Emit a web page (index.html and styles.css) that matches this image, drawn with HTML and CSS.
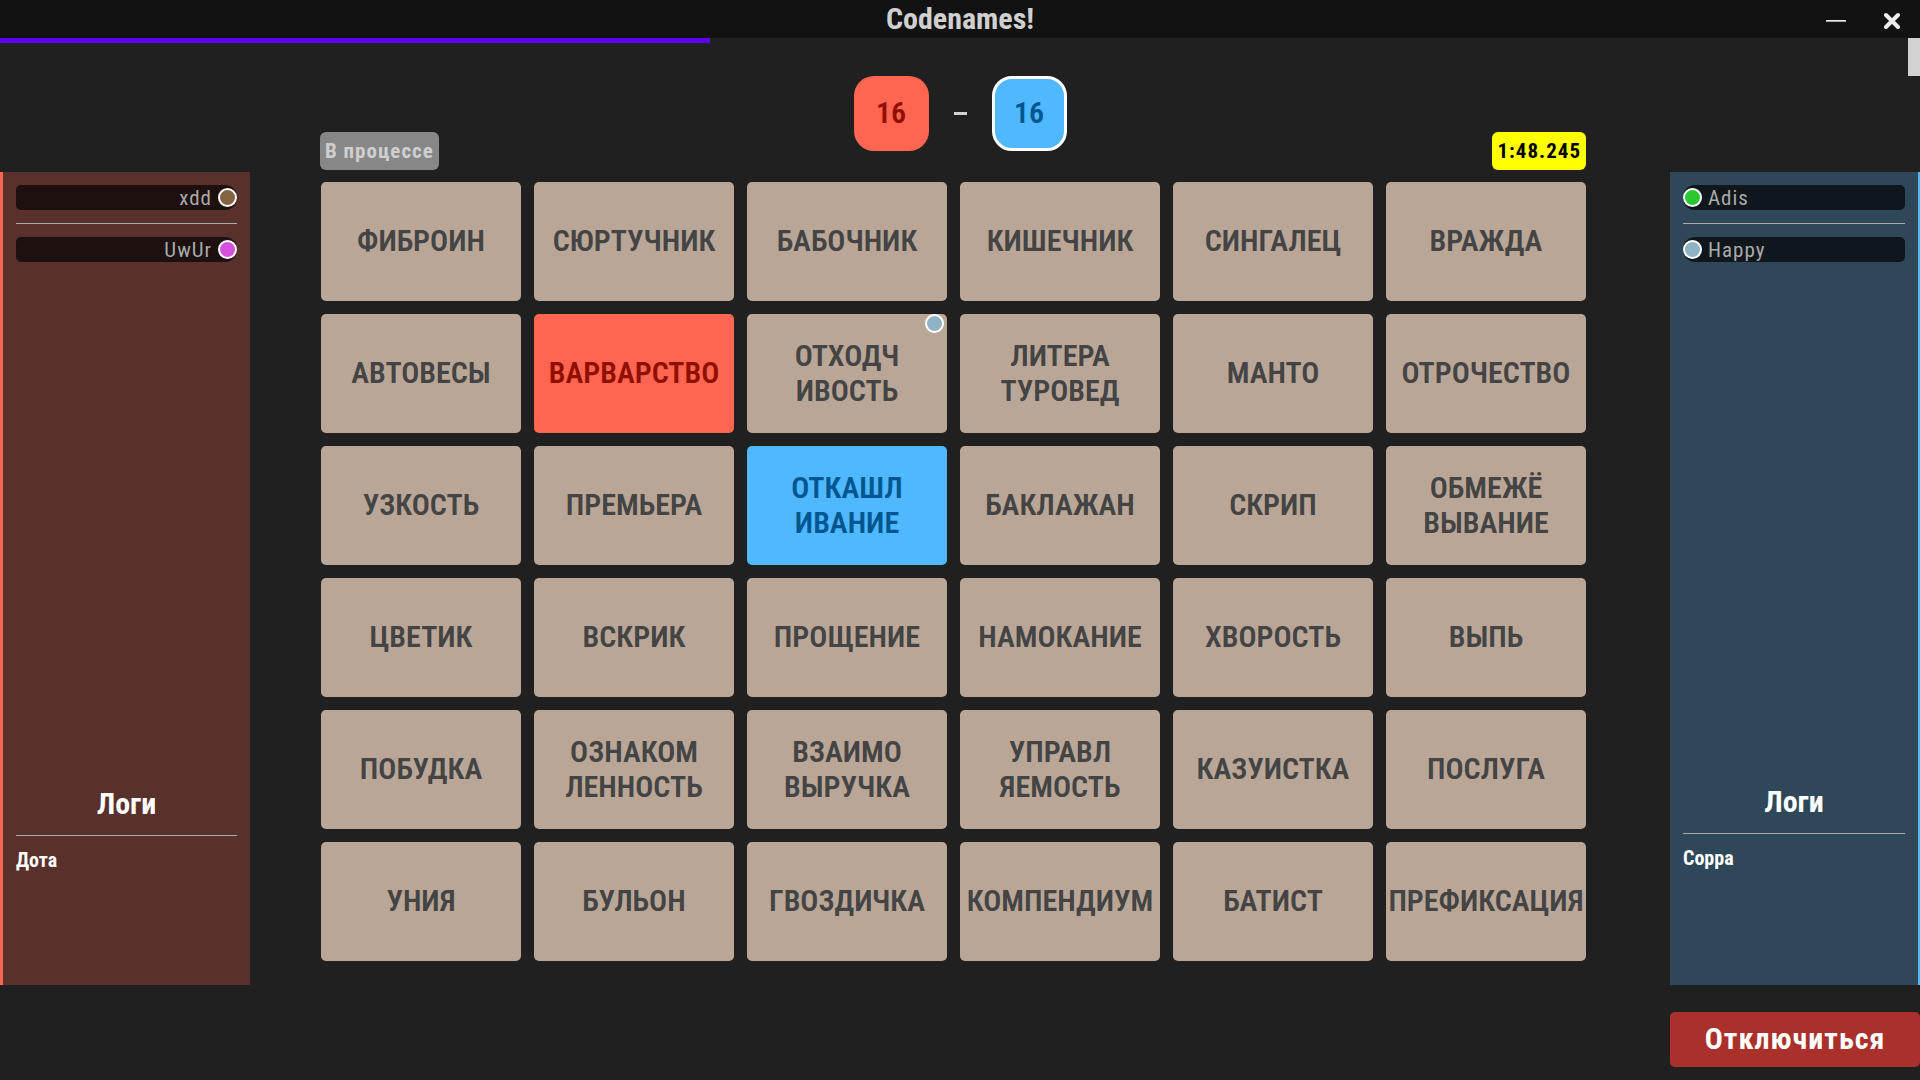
FILE: index.html
```html
<!DOCTYPE html>
<html lang="ru">
<head>
<meta charset="utf-8">
<meta name="viewport" content="width=device-width, initial-scale=1">
<title>Codenames!</title>
<link rel="stylesheet" href="styles.css">
</head>
<body>
<header class="titlebar">
  <h1 class="app-title">Codenames!</h1>
  <div class="window-controls">
    <button class="window-button" type="button" aria-label="Свернуть"><svg width="20" height="20" viewBox="0 0 20 20"><path d="M0 11.5h20" stroke="#e8e8e8" stroke-width="1"/><path d="M0 12.5h20" stroke="#aaa" stroke-width="1"/></svg></button>
    <button class="window-button" type="button" aria-label="Закрыть"><svg width="20" height="20" viewBox="0 0 20 20"><path d="M4 6l12 12M16 6L4 18" stroke="#ececec" stroke-width="4" stroke-linecap="round"/></svg></button>
  </div>
</header>
<div class="progress"><div class="progress-fill" style="width: 37%"></div></div>
<div class="scroll-thumb"></div>

<section class="summary">
  <div class="score">
    <span class="score-box score-red">16</span>
    <span class="score-dash"></span>
    <span class="score-box score-blue score-active">16</span>
  </div>
  <div class="tags">
    <span class="tag tag-status">В процессе</span>
    <span class="tag tag-timer">1:48.245</span>
  </div>
</section>

<main class="game">
  <aside class="team team-red">
    <ul class="players">
      <li class="player"><span class="player-name">xdd</span><span class="dot dot-brown"></span></li>
      <li class="player"><span class="player-name">UwUr</span><span class="dot dot-pink"></span></li>
    </ul>
    <section class="log">
      <h2 class="log-title">Логи</h2>
      <p class="log-entry">Дота</p>
    </section>
  </aside>

  <div class="board">
    <button class="card" type="button">ФИБРОИН</button>
    <button class="card" type="button">СЮРТУЧНИК</button>
    <button class="card" type="button">БАБОЧНИК</button>
    <button class="card" type="button">КИШЕЧНИК</button>
    <button class="card" type="button">СИНГАЛЕЦ</button>
    <button class="card" type="button">ВРАЖДА</button>
    <button class="card" type="button">АВТОВЕСЫ</button>
    <button class="card card-red" type="button">ВАРВАРСТВО</button>
    <button class="card" type="button">ОТХОДЧ<br>ИВОСТЬ<span class="dot dot-steel card-vote"></span></button>
    <button class="card" type="button">ЛИТЕРА<br>ТУРОВЕД</button>
    <button class="card" type="button">МАНТО</button>
    <button class="card" type="button">ОТРОЧЕСТВО</button>
    <button class="card" type="button">УЗКОСТЬ</button>
    <button class="card" type="button">ПРЕМЬЕРА</button>
    <button class="card card-blue" type="button">ОТКАШЛ<br>ИВАНИЕ</button>
    <button class="card" type="button">БАКЛАЖАН</button>
    <button class="card" type="button">СКРИП</button>
    <button class="card" type="button">ОБМЕЖЁ<br>ВЫВАНИЕ</button>
    <button class="card" type="button">ЦВЕТИК</button>
    <button class="card" type="button">ВСКРИК</button>
    <button class="card" type="button">ПРОЩЕНИЕ</button>
    <button class="card" type="button">НАМОКАНИЕ</button>
    <button class="card" type="button">ХВОРОСТЬ</button>
    <button class="card" type="button">ВЫПЬ</button>
    <button class="card" type="button">ПОБУДКА</button>
    <button class="card" type="button">ОЗНАКОМ<br>ЛЕННОСТЬ</button>
    <button class="card" type="button">ВЗАИМО<br>ВЫРУЧКА</button>
    <button class="card" type="button">УПРАВЛ<br>ЯЕМОСТЬ</button>
    <button class="card" type="button">КАЗУИСТКА</button>
    <button class="card" type="button">ПОСЛУГА</button>
    <button class="card" type="button">УНИЯ</button>
    <button class="card" type="button">БУЛЬОН</button>
    <button class="card" type="button">ГВОЗДИЧКА</button>
    <button class="card" type="button">КОМПЕНДИУМ</button>
    <button class="card" type="button">БАТИСТ</button>
    <button class="card" type="button">ПРЕФИКСАЦИЯ</button>
  </div>

  <aside class="team team-blue">
    <ul class="players">
      <li class="player"><span class="dot dot-green"></span><span class="player-name">Adis</span></li>
      <li class="player"><span class="dot dot-steel"></span><span class="player-name">Happy</span></li>
    </ul>
    <section class="log">
      <h2 class="log-title">Логи</h2>
      <p class="log-entry">Сорра</p>
    </section>
  </aside>
</main>

<footer class="footer">
  <button class="disconnect" type="button">Отключиться</button>
</footer>
</body>
</html>
```

FILE: styles.css
```css
* {
  box-sizing: border-box;
}

body {
  margin: 0;
  min-height: 100vh;
  background: #202020;
  color: #fff;
  font-family: "Roboto Condensed", Roboto, sans-serif;
}

button {
  border: 0;
  padding: 0;
  font-family: inherit;
}

/* Window chrome */
.titlebar {
  display: grid;
  grid-template-columns: 1fr auto 1fr;
  align-items: center;
  height: 38px;
  background: #121212;
}

.app-title {
  grid-column: 2;
  margin: 0;
  color: #d0d0d0;
  font-size: 30px;
  line-height: 38px;
}

.window-controls {
  display: flex;
  justify-content: flex-end;
  gap: 36px;
  padding-right: 18px;
}

.window-button {
  display: flex;
  background: none;
}

.progress {
  height: 5px;
}

.progress-fill {
  height: 100%;
  background: #5f00f5;
}

.scroll-thumb {
  position: absolute;
  top: 38px;
  right: 0;
  width: 12px;
  height: 38px;
  background: #d5d3d1;
}

/* Score and round tags share one band */
.summary {
  display: grid;
  height: 129px;
  padding-top: 33px;
}

.score,
.tags {
  grid-area: 1 / 1;
}

.score {
  display: flex;
  align-items: center;
  justify-self: center;
  align-self: start;
  gap: 25px;
}

.score-box {
  display: grid;
  place-items: center;
  width: 75px;
  height: 75px;
  padding-bottom: 2px;
  border-radius: 20px;
  font-size: 30px;
  font-weight: 600;
}

.score-dash {
  width: 13px;
  height: 3px;
  background: #d0d0d0;
}

.score-red {
  background: #ff6550;
  color: #8f0f00;
}

.score-blue {
  background: #50b8ff;
  color: #005690;
}

.score-active {
  border: 3px solid #fff;
}

.tags {
  display: flex;
  justify-content: space-between;
  align-items: flex-end;
  padding: 0 334px 2px 320px;
}

.tag {
  padding: 0 5px;
  border-radius: 6px;
  font-size: 21px;
  font-weight: 700;
  line-height: 38px;
  letter-spacing: 1px;
}

.tag-status {
  background: #878787;
  color: #cfcfcf;
}

.tag-timer {
  background: #ff0;
  color: #000;
}

/* Teams and board */
.game {
  display: grid;
  grid-template-columns: 250px 1fr 250px;
}

.team {
  display: grid;
  grid-template-rows: 600px 1fr;
  padding: 13px;
}

.team-red {
  border-left: 3px solid #ff6550;
  background: #58302c;
}

.team-blue {
  grid-template-rows: 598px 1fr;
  border-right: 2px solid #50b8ff;
  background: #2e485a;
}

.players {
  margin: 0;
  padding: 0;
  list-style: none;
}

.player {
  display: flex;
  align-items: center;
  gap: 6px;
  height: 25px;
  background: #0f171d;
  border-radius: 12px 5px 5px 12px;
}

.team-red .player {
  justify-content: flex-end;
  background: #1e100f;
  border-radius: 5px 12px 12px 5px;
}

.player + .player {
  margin-top: 27px;
  position: relative;
}

.player + .player::before {
  content: "";
  position: absolute;
  top: -14px;
  left: 0;
  right: 0;
  height: 1px;
  background: #aaa;
}

.player-name {
  padding-top: 2px;
  color: #aaa;
  font-size: 21px;
  line-height: 25px;
  letter-spacing: 1px;
}

.dot {
  flex: none;
  width: 19px;
  height: 19px;
  border: 2px solid #fff;
  border-radius: 50%;
}

.dot-brown { background: #846443; }
.dot-pink { background: #d650e0; }
.dot-green { background: #28c830; }
.dot-steel { background: #8fb3c4; }

.log-title {
  margin: 0;
  padding-bottom: 12px;
  border-bottom: 1px solid #aaa;
  font-size: 30px;
  line-height: 38px;
  text-align: center;
}

.log-entry {
  margin: 12px 0;
  font-size: 20px;
  font-weight: 700;
  line-height: 24px;
}

.board {
  display: grid;
  grid-template-columns: repeat(6, minmax(0, 1fr));
  grid-auto-rows: 119px;
  gap: 13px;
  padding: 10px 84px 24px 71px;
}

.card {
  position: relative;
  padding-bottom: 2px;
  border-radius: 5px;
  background: #b9a696;
  color: #444;
  font-size: 30px;
  font-weight: 600;
  line-height: 35px;
}

.card-red {
  background: #ff6550;
  color: #8f0f00;
}

.card-blue {
  background: #50b8ff;
  color: #005690;
}

.card-vote {
  position: absolute;
  top: 0;
  right: 3px;
}

.footer {
  display: flex;
  justify-content: flex-end;
  padding: 27px 0 13px;
}

.disconnect {
  width: 250px;
  height: 55px;
  padding-bottom: 2px;
  border-radius: 5px;
  background: #aa302c;
  color: #fff;
  font-size: 30px;
  font-weight: 700;
  letter-spacing: 1px;
}
```
